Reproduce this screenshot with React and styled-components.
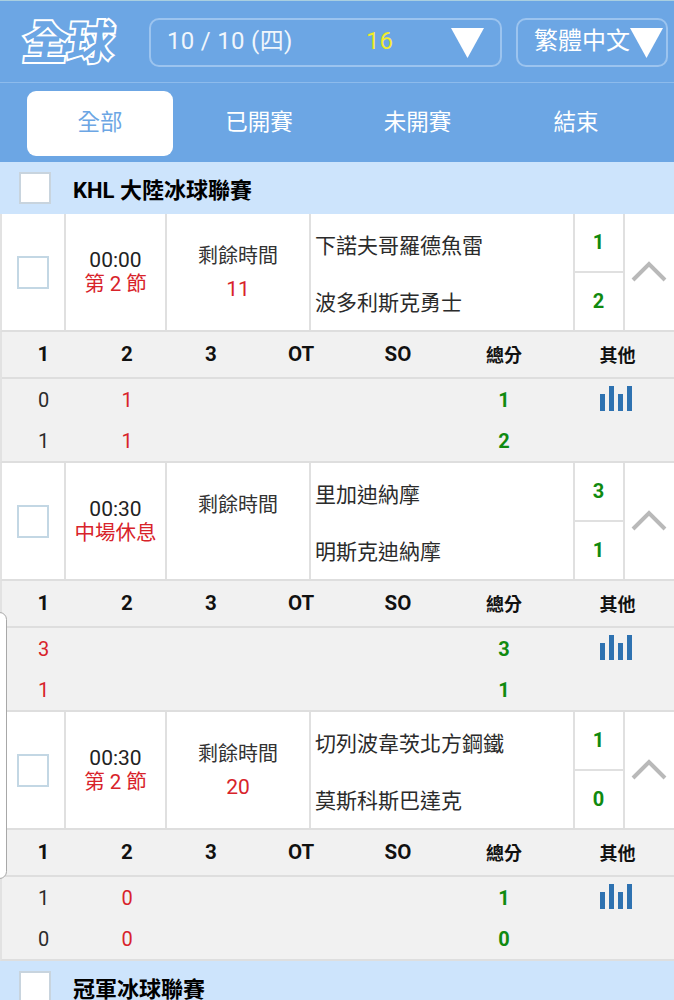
import React from "react";
import styled, { createGlobalStyle } from "styled-components";

const FONT = `Roboto, "Noto Sans CJK TC", sans-serif`;

const GlobalStyle = createGlobalStyle`
  html, body { margin: 0; padding: 0; background: #fff; }
  body { font-family: ${FONT}; overflow: hidden; height: 1000px; }
  * { box-sizing: border-box; }
`;

const Page = styled.div`
  position: relative;
  width: 674px;
  height: 1000px;
  overflow: hidden;
`;

const TopBar = styled.div`
  height: 83px;
  padding-top: 17px;
  background: #6ca6e4;
  border-top: 1px solid #a9cfe0;
  border-bottom: 1px solid #8dbbec;
  display: flex;
  align-items: flex-start;
`;

const Logo = styled.div`
  width: 149px;
  padding-left: 23px;
  margin-top: 2px;
  font-size: 46px;
  line-height: 46px;
  font-weight: 700;
  letter-spacing: -1px;
  color: #6ca6e4;
  -webkit-text-stroke: 4px #fff;
  paint-order: stroke fill;
  white-space: nowrap;
  transform: skewX(-7deg);
`;

const Select = styled.div`
  height: 49px;
  width: ${p => p.$w}px;
  margin-right: ${p => p.$mr || 0}px;
  padding-left: ${p => p.$pl}px;
  border: 2px solid #9cc4ef;
  border-radius: 10px;
  display: flex;
  align-items: center;
  color: #fff;
  font-size: 24px;
  white-space: nowrap;
`;

const SelectText = styled.span`
  line-height: 30px;
  margin-bottom: 4px;
`;

const DateText = styled(SelectText)`
  width: 199px;
  opacity: 0.9;
  letter-spacing: 0.3px;
`;

const Count = styled(SelectText)`
  width: 85px;
  color: #f2ec2a;
`;

const Arrow = styled.svg`
  width: 33px;
  height: 30px;
  fill: #fff;
  flex: none;
`;

const Tabs = styled.div`
  height: 79px;
  background: #6ca6e4;
  padding: 8px 0 0 27px;
  display: flex;
  align-items: flex-start;
`;

const Tab = styled.div`
  width: ${p => p.$w}px;
  height: 65px;
  padding-bottom: 7px;
  border-radius: 9px;
  background: ${p => (p.$active ? "#fff" : "transparent")};
  color: ${p => (p.$active ? "#6ca6e4" : "#fff")};
  font-size: 22.5px;
  display: flex;
  align-items: center;
  justify-content: center;
`;

const League = styled.div`
  height: 52px;
  background: #cde4fc;
  padding-left: 19px;
  display: flex;
  align-items: center;
  gap: 22px;
  font-size: 22px;
  font-weight: 700;
  color: #000;
`;

const LeagueBox = styled.div`
  width: 32px;
  height: 32px;
  background: #fff;
  border: 2px solid #c8d4de;
`;

const Match = styled.div`
  height: 118px;
  background: #fff;
  border-left: 2px solid #e2e2e2;
  border-bottom: 2px solid #dedede;
  display: grid;
  grid-template-columns: 64px 101px 144px 264px 50px 1fr;
`;

const Cell = styled.div`
  border-right: 2px solid #e0e0e0;
  display: flex;
  flex-direction: column;
  align-items: center;
  justify-content: ${p => p.$top ? "flex-start" : "center"};
  padding-top: ${p => p.$top ? "27px" : "0"};
  &:last-child { border-right: 0; }
`;

const CheckBox = styled.div`
  width: 32px;
  height: 33px;
  border: 2px solid #c3d7e4;
`;

const Clock = styled.div`
  font-size: 21px;
  line-height: 24px;
  margin-top: -1px;
  color: #222;
`;

const RedLine = styled.div`
  font-size: 20.5px;
  line-height: 24px;
  color: #d8232a;
`;

const RemainLabel = styled.div`
  font-size: 20px;
  line-height: 30px;
  color: #333;
`;

const RemainValue = styled.div`
  font-size: 21px;
  line-height: 34px;
  margin-top: 1px;
  color: #d8232a;
`;

const Names = styled(Cell)`
  align-items: flex-start;
  justify-content: flex-start;
  padding: 14px 0 0 4px;
  gap: 21px;
`;

const TeamName = styled.div`
  font-size: 21px;
  line-height: 36px;
  color: #2b2b2b;
  white-space: nowrap;
`;

const Scores = styled(Cell)`
  justify-content: flex-start;
`;

const TeamScore = styled.div`
  width: 100%;
  flex: 1;
  display: flex;
  align-items: center;
  justify-content: center;
  padding: 0 1px 2px 0;
  color: #108a10;
  font-size: 20px;
  font-weight: 700;
  &:first-child { border-bottom: 2px solid #e0e0e0; }
`;

const Chevron = styled.svg`
  width: 36px;
  height: 22px;
  margin: -2px 2px 0 0;
  fill: none;
  stroke: #b9b9b9;
  stroke-width: 4px;
`;

const Stats = styled.div`
  height: 131px;
  background: #f1f1f1;
  border-left: 2px solid #e2e2e2;
  border-bottom: 2px solid #dedede;
`;

const StatsHead = styled.div`
  height: 47px;
  border-bottom: 2px solid #dedede;
  display: grid;
  grid-template-columns: 83px 84px 84px 96px 98px 114px 113px;
  align-items: center;
  font-weight: 700;
  color: #111;
  padding-bottom: 1px;
`;

const StatsRow = styled.div`
  height: 41px;
  display: grid;
  grid-template-columns: 83px 84px 84px 96px 98px 114px 113px;
  align-items: center;
  font-size: 20px;
`;

const HeadCol = styled.div`
  text-align: center;
  font-size: ${p => (p.$cjk ? "18px" : "20.5px")};
`;

const Col = styled.div`
  text-align: center;
  color: ${p => p.$color || "#2b2b2b"};
  font-weight: ${p => (p.$bold ? 700 : 400)};
`;

const BarsIcon = styled.svg`
  display: block;
  width: 32px;
  height: 25px;
  margin: -3px 0 0 39px;
  fill: #2e72b1;
`;

const SidePanel = styled.div`
  position: absolute;
  left: -8px;
  top: 612px;
  width: 15px;
  height: 267px;
  background: #fff;
  border: 1px solid #a8a8a8;
  border-radius: 8px;
`;

const RED = "#d8232a";
const GREEN = "#108a10";

const matches = [
  {
    clock: "00:00", period: "第 2 節", remain: "11",
    home: "下諾夫哥羅德魚雷", away: "波多利斯克勇士",
    a: [{ v: "0" }, { v: "1", c: RED }], b: [{ v: "1" }, { v: "1", c: RED }],
    homeTotal: "1", awayTotal: "2",
  },
  {
    clock: "00:30", period: "中場休息", remain: "",
    home: "里加迪納摩", away: "明斯克迪納摩",
    a: [{ v: "3", c: RED }, { v: "" }], b: [{ v: "1", c: RED }, { v: "" }],
    homeTotal: "3", awayTotal: "1",
  },
  {
    clock: "00:30", period: "第 2 節", remain: "20",
    home: "切列波韋茨北方鋼鐵", away: "莫斯科斯巴達克",
    a: [{ v: "1" }, { v: "0", c: RED }], b: [{ v: "0" }, { v: "0", c: RED }],
    homeTotal: "1", awayTotal: "0",
  },
];

function ScoreRow({ periods, total, chart }) {
  return (
    <StatsRow>
      {periods.map((p, i) => (
        <Col key={i} $color={p.c}>{p.v}</Col>
      ))}
      <Col />
      <Col />
      <Col />
      <Col $color={GREEN} $bold>{total}</Col>
      <div>
        {chart && (
          <BarsIcon viewBox="0 0 32 25">
            <rect x="0" y="8" width="5" height="17" />
            <rect x="9" y="0" width="5" height="25" />
            <rect x="18" y="8" width="5" height="17" />
            <rect x="27" y="0" width="5" height="25" />
          </BarsIcon>
        )}
      </div>
    </StatsRow>
  );
}

function MatchBlock({ m }) {
  return (
    <>
      <Match>
        <Cell><CheckBox /></Cell>
        <Cell>
          <Clock>{m.clock}</Clock>
          <RedLine>{m.period}</RedLine>
        </Cell>
        <Cell $top>
          <RemainLabel>剩餘時間</RemainLabel>
          <RemainValue>{m.remain}</RemainValue>
        </Cell>
        <Names>
          <TeamName>{m.home}</TeamName>
          <TeamName>{m.away}</TeamName>
        </Names>
        <Scores>
          <TeamScore>{m.homeTotal}</TeamScore>
          <TeamScore>{m.awayTotal}</TeamScore>
        </Scores>
        <Cell>
          <Chevron viewBox="0 0 36 22">
            <path d="M2 20 L18 4 L34 20" />
          </Chevron>
        </Cell>
      </Match>
      <Stats>
        <StatsHead>
          <HeadCol>1</HeadCol>
          <HeadCol>2</HeadCol>
          <HeadCol>3</HeadCol>
          <HeadCol>OT</HeadCol>
          <HeadCol>SO</HeadCol>
          <HeadCol $cjk>總分</HeadCol>
          <HeadCol $cjk>其他</HeadCol>
        </StatsHead>
        <ScoreRow periods={m.a} total={m.homeTotal} chart />
        <ScoreRow periods={m.b} total={m.awayTotal} />
      </Stats>
    </>
  );
}

export default function App() {
  return (
    <Page>
      <GlobalStyle />
      <TopBar>
        <Logo>全球</Logo>
        <Select $w={353} $mr={14} $pl={16}>
          <DateText>10 / 10 (四)</DateText>
          <Count>16</Count>
          <Arrow viewBox="0 0 33 30"><path d="M0 0 H33 L16.5 30 Z" /></Arrow>
        </Select>
        <Select $w={152} $pl={16}>
          <SelectText>繁體中文</SelectText>
          <Arrow viewBox="0 0 33 30"><path d="M0 0 H33 L16.5 30 Z" /></Arrow>
        </Select>
      </TopBar>
      <Tabs>
        <Tab $w={146} $active>全部</Tab>
        <Tab $w={172}>已開賽</Tab>
        <Tab $w={145}>未開賽</Tab>
        <Tab $w={172}>結束</Tab>
      </Tabs>
      <League><LeagueBox />KHL 大陸冰球聯賽</League>
      {matches.map((m, i) => (
        <MatchBlock key={i} m={m} />
      ))}
      <League><LeagueBox />冠軍冰球聯賽</League>
      <SidePanel />
    </Page>
  );
}
